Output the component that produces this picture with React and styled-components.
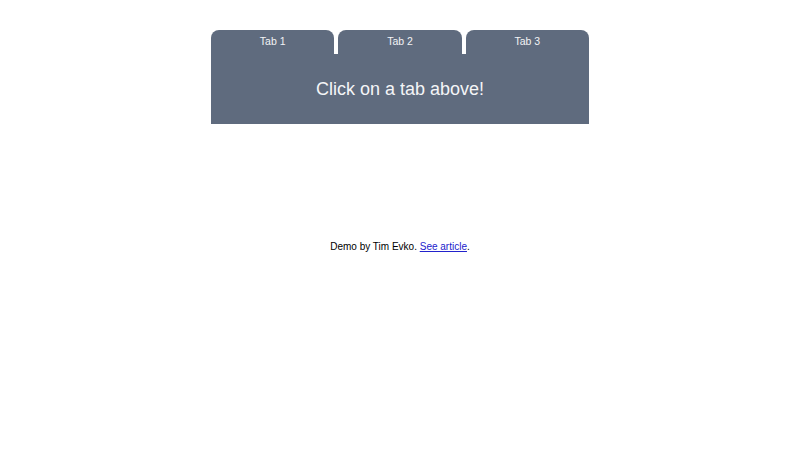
import React from 'react';
import styled, { createGlobalStyle } from 'styled-components';

const GlobalStyle = createGlobalStyle`
  body {
    margin: 0;
    background: #fff;
    font-family: 'Liberation Sans', Arial, sans-serif;
  }
`;

const tabs = ['Tab 1', 'Tab 2', 'Tab 3'];

function TabsDemo({ className }) {
  return (
    <div className={className}>
      <div className="panel">
        <div className="tabs">
          {tabs.map((t) => (
            <button key={t} className="tab" type="button">
              {t}
            </button>
          ))}
        </div>
        <div className="content">Click on a tab above!</div>
      </div>
      <div className="footer">
        Demo by Tim Evko. <a href="#article">See article</a>.
      </div>
    </div>
  );
}

const Page = styled(TabsDemo)`
  padding-top: 30px;
  display: flex;
  flex-direction: column;
  align-items: center;
  .panel {
    width: 378px;
  }
  .tabs {
    display: flex;
    gap: 4px;
  }
  .tab {
    flex: 1;
    height: 24px;
    border: none;
    border-radius: 8px 8px 0 0;
    background: #5f6b7e;
    color: #f2f3f5;
    font-family: inherit;
    font-size: 10.5px;
    padding: 0 0 3px;
    cursor: pointer;
  }
  .content {
    height: 70px;
    background: #5f6b7e;
    color: #f4f5f7;
    font-size: 18px;
    display: flex;
    align-items: center;
    justify-content: center;
  }
  .footer {
    margin-top: 117px;
    font-size: 10px;
    color: #000;
    a {
      color: #2222cc;
    }
  }
`;

export default function App() {
  return (
    <>
      <GlobalStyle />
      <Page />
    </>
  );
}
